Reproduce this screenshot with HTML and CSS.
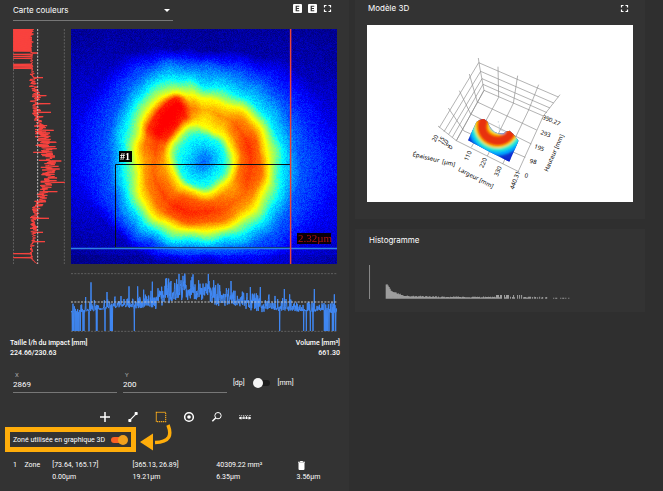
FILE: index.html
```html
<!DOCTYPE html>
<html lang="fr">
<head>
<meta charset="utf-8">
<title>Carte couleurs</title>
<link rel="stylesheet" href="styles.css">
</head>
<body>
<main class="layout">
  <section class="panel map-panel">
    <header class="map-header">
      <div class="select-wrap">
        <select class="view-select" aria-label="Vue"><option>Carte couleurs</option></select>
      </div>
      <div class="header-actions">
        <button class="icon-btn" aria-label="Exporter la carte"><svg viewBox="0 0 18 18"><rect width="18" height="18" rx="2" fill="#fff"/><path d="M12.500 4.500H6.500v9h6M6 9h6" fill="none" stroke="#333" stroke-width="2.400"/></svg></button>
        <button class="icon-btn" aria-label="Exporter les profils"><svg viewBox="0 0 18 18"><rect width="18" height="18" rx="2" fill="#fff"/><path d="M12.500 4.500H6.500v9h6M6 9h6" fill="none" stroke="#333" stroke-width="2.400"/></svg></button>
        <button class="icon-btn" aria-label="Plein écran"><svg viewBox="0 0 18 18"><path d="M3 7V3h4M11 3h4v4M15 11v4h-4M7 15H3v-4" fill="none" stroke="#fff" stroke-width="2.400"/></svg></button>
      </div>
    </header>

    <div class="charts">
      <svg class="profile-v" viewBox="0 0 156 705" preserveAspectRatio="none" role="img" aria-label="Profil vertical">
        <path class="guide" d="M1.500 0V705M154 0V705"/>
        <polyline id="profileV" class="line-red"/>
        <path class="guide guide-mid" d="M74 0V705"/>
      </svg>
      <div class="map">
        <canvas id="heat" class="heat" width="266" height="235"></canvas>
        <svg class="map-overlay" viewBox="0 0 266 235">
          <path d="M44.500 219V135.500H219" fill="none" stroke="#071018" stroke-width="1"/>
          <path d="M44 218.500H219" stroke="#0b2a55" stroke-width="1"/>
          <path d="M0 219.500H266" stroke="#2f80e4" stroke-width="1.300"/>
          <path d="M219.600 0V235" stroke="#ea4438" stroke-width="1.500"/>
          <rect x="48" y="122" width="13" height="11" fill="#000"/>
          <text class="zone-tag" x="49" y="131">#1</text>
          <rect x="226" y="204" width="34" height="11" fill="#0a0008"/>
          <text class="value-tag" x="227" y="213">2.32µm</text>
        </svg>
      </div>
      <svg class="profile-h" viewBox="0 0 798 177" preserveAspectRatio="none" role="img" aria-label="Profil horizontal">
        <path class="guide" d="M0 2H798M0 175H798"/>
        <polyline id="profileH" class="line-blue"/>
        <path class="guide guide-mid" d="M0 87H798"/>
      </svg>
    </div>

    <div class="stats">
      <div><div class="stat-name">Taille l/h du impact [mm]</div><div class="stat-value">224.66/230.63</div></div>
      <div class="stat-right"><div class="stat-name">Volume [mm³]</div><div class="stat-value">661.30</div></div>
    </div>

    <div class="coords">
      <div class="field"><label for="x">X</label><input id="x" type="text" value="2869"></div>
      <div class="field"><label for="y">Y</label><input id="y" type="text" value="200"></div>
      <label class="unit"><span>[dp]</span><input type="checkbox" class="switch"><span>[mm]</span></label>
    </div>

    <div class="tools">
      <button class="tool" aria-label="Point"><svg viewBox="0 0 36 36"><path d="M18 3V33M3 18H33" stroke="#fff" stroke-width="4.500"/></svg></button>
      <button class="tool" aria-label="Ligne"><svg viewBox="0 0 36 36"><path d="M8 28L28 8" stroke="#fff" stroke-width="3.500"/><rect x="4" y="24" width="9" height="9" rx="2" fill="#fff"/><rect x="23" y="3" width="9" height="9" rx="2" fill="#fff"/></svg></button>
      <button class="tool" aria-label="Zone"><svg viewBox="0 0 36 36"><rect x="4" y="4" width="28" height="28" fill="none" stroke="#f5a81c" stroke-width="3.500" stroke-dasharray="4 2"/></svg></button>
      <button class="tool" aria-label="Cercle"><svg viewBox="0 0 36 36"><circle cx="18" cy="18" r="13" fill="none" stroke="#fff" stroke-width="4.500"/><circle cx="18" cy="18" r="5.500" fill="#fff"/></svg></button>
      <button class="tool" aria-label="Loupe"><svg viewBox="0 0 36 36"><circle cx="21" cy="14" r="9.500" fill="none" stroke="#fff" stroke-width="3"/><path d="M14 21L4 31" stroke="#fff" stroke-width="4.500"/></svg></button>
      <button class="tool" aria-label="Règle"><svg viewBox="0 0 36 36"><path d="M0 21H36" stroke="#fff" stroke-width="3"/><path d="M1 12v3M7 12v3M13 12v3M19 12v3M25 12v3M31 12v3M35 12v3" stroke="#bbb" stroke-width="3"/><path d="M0 21l7-5v10zM36 21l-7-5v10zM13 16h3v8h-3zM21 16h3v8h-3z" fill="#fff"/></svg></button>
    </div>

    <div class="zone-option">
      <label class="highlight"><span>Zoné utilisée en graphique 3D</span><input type="checkbox" class="switch switch-on" checked></label>
      <svg class="arrow" viewBox="0 0 36 28"><path d="M32 1C36 11 34 18 19 18.500" fill="none" stroke="#ffad0a" stroke-width="3.500"/><path d="M4 18L17 9.500V26.500Z" fill="#ffad0a"/></svg>
    </div>

    <table class="zones">
      <tr><td class="c-id">1</td><td class="c-kind">Zone</td><td class="c-a">[73.64, 165.17]</td><td class="c-b">[365.13, 26.89]</td><td class="c-c">40309.22 mm²</td><td class="c-d"><button class="trash" aria-label="Supprimer"><svg viewBox="0 0 21 27"><path d="M0 2h6l1-2h7l1 2h6v3H0zM1.500 6h18V24a3 3 0 0 1-3 3h-12a3 3 0 0 1-3-3z" fill="#fff"/></svg></button></td></tr>
      <tr><td></td><td></td><td>0.00µm</td><td>19.21µm</td><td>6.35µm</td><td>3.56µm</td></tr>
    </table>
  </section>

  <div class="side">
    <section class="panel model-panel">
      <header class="model-header">
        <h2>Modèle 3D</h2>
        <button class="icon-btn" aria-label="Plein écran"><svg viewBox="0 0 18 18"><path d="M3 7V3h4M11 3h4v4M15 11v4h-4M7 15H3v-4" fill="none" stroke="#fff" stroke-width="2.400"/></svg></button>
      </header>
      <svg class="model" viewBox="-99 -75 798 531" role="img" aria-label="Modèle 3D">
        <defs>
          <clipPath id="surf"><path d="M204 271L229 216Q240 206 252 207L262 214Q270 236 284 246Q298 252 311 250Q316 243 329 242L340 252L356 272L328 335L268 305Z"/></clipPath>
          <filter id="soft" x="-50%" y="-50%" width="200%" height="200%"><feGaussianBlur stdDeviation="3"/></filter>
        </defs>
        <g fill="none" stroke="#8c8c8c" stroke-width="2">
          <path d="M236 38L475 141M242 64L461 159M246 86L450 174M249 103L441 188M252 121L430 198"/>
          <path d="M235 24L238 45L252 121M294 50L296 142M353 77L340 160M416 104L386 180M480 134L430 198"/>
          <path d="M236 38L118 233M242 64L132 245M246 86L146 253M249 103L157 262M252 121L169 272"/>
          <path d="M208 72L232 156L410 240M178 122L212 192L394 282M145 174L192 243L376 322M114 228L169 272L358 366"/>
          <path d="M252 121L169 272M296 142L214 292M340 160L262 318M386 180L308 342M430 198L354 366"/>
        </g>
        <g clip-path="url(#surf)">
          <rect x="190" y="190" width="180" height="160" fill="#102fd0"/>
          <g fill="none" filter="url(#soft)" stroke-linecap="round">
            <path d="M246 210C232 268 305 302 334 250" stroke="#00a8ff" stroke-width="82"/>
            <path d="M248 210C232 268 305 294 332 250" stroke="#25ecd0" stroke-width="64"/>
            <path d="M248 210C234 268 305 292 330 250" stroke="#ffdc00" stroke-width="46"/>
            <path d="M250 212C232 268 305 294 330 250" stroke="#ff8200" stroke-width="34"/>
            <path d="M249 214C232 268 304 292 330 254" stroke="#e83208" stroke-width="26"/>
            <path d="M276 232Q290 248 310 246" stroke="#00b8f0" stroke-width="11"/>
            <path d="M196 278L220 288M308 334L336 336" stroke="#0a20c8" stroke-width="18"/>
          </g>
        </g>
        <path d="M295 213v5M298 224v18M303 240l8 4" stroke="#b9c9d0" stroke-width="2"/>
        <g class="axis-text">
          <text transform="translate(37 318) rotate(14)" xml:space="preserve">Épaisseur  [µm]</text>
          <text transform="translate(173 362) rotate(27)">Largeur [mm]</text>
          <text transform="translate(443 366) rotate(-66)">Hauteur [mm]</text>
          <text transform="translate(426 206) rotate(23)">390.27</text>
          <text transform="translate(420 252) rotate(20)">293</text>
          <text transform="translate(401 294) rotate(20)">195</text>
          <text transform="translate(388 338) rotate(15)">98</text>
          <text transform="translate(373 382) rotate(12)">0</text>
          <text transform="translate(203 334) rotate(-66)">110</text>
          <text transform="translate(249 355) rotate(-66)">220</text>
          <text transform="translate(293 380) rotate(-66)">330</text>
          <text transform="translate(341 419) rotate(-70)">440.31</text>
          <text transform="translate(106 277) rotate(-62)">20</text>
          <text transform="translate(122 282) rotate(-50)">15</text>
          <text transform="translate(132 290) rotate(-45)">10</text>
          <text transform="translate(143 294) rotate(-35)">5</text>
          <text transform="translate(150 299) rotate(-30)">0</text>
        </g>
      </svg>
    </section>

    <section class="panel histo-panel">
      <h2>Histogramme</h2>
      <svg class="histo" viewBox="0 0 789 102" role="img" aria-label="Histogramme">
        <path d="M1.500 0V102" stroke="#8a8a8a" stroke-width="3"/>
        <path id="bars" fill="#b4b4b4"/>
      </svg>
    </section>
  </div>
</main>
<script src="charts.js"></script>
</body>
</html>
```
FILE: styles.css
```css
* { box-sizing: border-box; }

body {
  margin: 0;
  min-height: 100vh;
  background: #2f2f2f;
  color: #fff;
  font: 7px/10px Roboto, "Liberation Sans", sans-serif;
}

button { padding: 0; border: 0; background: none; color: inherit; display: block; }
button svg { display: block; width: 100%; height: 100%; }

h2 { margin: 0; font: 8px/12px Inter, sans-serif; }

.layout {
  display: grid;
  grid-template-columns: 349fr 290fr;
  gap: 6px;
  padding-right: 18px;
  min-height: 100vh;
}

.panel { background: #333; }

.map-header {
  display: flex;
  justify-content: space-between;
  align-items: flex-start;
  padding: 0 17px 8px 13px;
}

.select-wrap { position: relative; width: 50%; border-bottom: 1px solid #777; }
.select-wrap::after {
  content: "";
  position: absolute;
  right: 3px;
  top: 9px;
  border: 3px solid transparent;
  border-top-color: #fff;
  border-bottom: 0;
}

.view-select {
  appearance: none;
  width: 100%;
  height: 20px;
  padding: 0;
  border: 0;
  background: none;
  color: #fff;
  font: 8px/20px Inter, sans-serif;
}

.header-actions { display: flex; gap: 6px; padding-top: 4px; }
.icon-btn { width: 9px; height: 9px; }

.charts {
  display: grid;
  grid-template-columns: 52fr 266fr;
  gap: 9px 6px;
  padding: 0 12px 0 13px;
}

.profile-v { width: 100%; height: 100%; min-height: 0; contain: size; }
.map { position: relative; aspect-ratio: 266 / 235; }
.heat { display: block; width: 100%; height: 100%; }
.map-overlay { position: absolute; inset: 0; width: 100%; height: 100%; }
.profile-h { grid-column: 2; display: block; width: 100%; aspect-ratio: 266 / 59; }

.guide { fill: none; stroke: #777; stroke-width: 2; stroke-dasharray: 6 4; }
.guide-mid { stroke: #c4c4c4; stroke-width: 3; }
.line-red { fill: none; stroke: #f9433f; stroke-width: 3; }
.line-blue { fill: none; stroke: #4088f4; stroke-width: 3; }

.zone-tag { font: bold 10px "Liberation Serif", serif; fill: #fff; }
.value-tag { font: 11px "Liberation Serif", serif; fill: #b3140f; }

.stats {
  display: flex;
  justify-content: space-between;
  padding: 6px 9px 0 10px;
}
.stat-right { text-align: right; }
.stat-name, .stat-value { font-weight: 500; }

.coords {
  display: grid;
  grid-template-columns: repeat(3, 1fr);
  gap: 6px;
  padding: 13px 12px 0 13px;
}
.field { border-bottom: 1px solid #777; }
.field label { display: block; font-size: 6px; line-height: 8px; color: #aaa; padding-left: 2px; }
.field input {
  display: block;
  width: 100%;
  height: 13px;
  padding: 0 0 3px;
  border: 0;
  background: none;
  color: #fff;
  font: 8px/10px Roboto, sans-serif;
}
.unit { display: flex; align-items: center; gap: 8px; padding-top: 2px; }

.switch {
  appearance: none;
  position: relative;
  width: 17px;
  height: 10px;
  margin: 0;
}
.switch::before {
  content: "";
  position: absolute;
  inset: 2px 0 2px 2px;
  border-radius: 3px;
  background: #1c1c1c;
}
.switch::after {
  content: "";
  position: absolute;
  left: 0;
  top: 0;
  width: 10px;
  height: 10px;
  border-radius: 50%;
  background: #f4f4f4;
}
.switch-on::before { inset: 2px 2px 2px 0; background: #fb6023; }
.switch-on::after { left: auto; right: 0; background: #f2a11c; }

.tools { display: flex; justify-content: center; gap: 16px; padding: 18px 0 4px; }
.tool { width: 12px; height: 12px; }

.zone-option { display: flex; padding-left: 5px; position: relative; width: max-content; }
.highlight {
  display: flex;
  align-items: center;
  gap: 6px;
  height: 25px;
  padding: 0 3px;
  border: 5px solid #ffad0a;
}
.arrow { position: absolute; left: 100%; top: -3px; width: 36px; height: 28px; }

.zones {
  width: 100%;
  margin-top: 7px;
  table-layout: fixed;
  border-collapse: collapse;
}
.zones td { padding: 1px 0; height: 12px; white-space: nowrap; }
.zones td:first-child { padding-left: 13px; }
.c-id { width: 7%; }
.c-kind { width: 8%; }
.c-a { width: 23%; }
.c-b { width: 24%; }
.c-c { width: 23%; }
.c-d { width: 15%; }
.trash { width: 7px; height: 9px; margin-left: 1px; }

.side { display: flex; flex-direction: column; gap: 10px; }
.model-panel { padding: 2px 12px 17px; }
.model-header { display: flex; justify-content: space-between; align-items: center; padding: 0 4px 11px 1px; }
.model { display: block; width: 100%; background: #fff; }
.axis-text { font: 18px "Noto Sans", sans-serif; fill: #000; }

.histo-panel { padding: 5px 12px 13px 14px; }
.histo { display: block; width: 100%; margin-top: 19px; }
```
FILE: charts.js
```js
// Repeatable pseudo-random source so that the charts are stable between loads.
let seed = 12345;
function rnd() {
  seed = (seed * 1664525 + 1013904223) >>> 0;
  return seed / 4294967296;
}

function lerpTable(table, x) {
  if (x <= table[0][0]) return table[0][1];
  for (let i = 1; i < table.length; i++) {
    if (x <= table[i][0]) {
      const [x0, y0] = table[i - 1], [x1, y1] = table[i];
      return y0 + (y1 - y0) * (x - x0) / (x1 - x0);
    }
  }
  return table[table.length - 1][1];
}

// Impact outline: angle, then radii of inner cyan, inner yellow, ridge,
// outer yellow, outer cyan, light blue, dark blue; last the ridge and far levels.
const rings = [
  [0, 62, 88, 138, 193, 236, 285, 380, 0.82, 0.14],
  [20, 58, 85, 140, 198, 240, 290, 390, 0.81, 0.12],
  [45, 58, 84, 146, 205, 246, 295, 370, 0.77, 0.1],
  [90, 70, 90, 150, 205, 238, 265, 300, 0.83, 0.08],
  [122, 73, 92, 158, 216, 254, 285, 330, 0.84, 0.06],
  [135, 74, 95, 158, 220, 260, 298, 340, 0.81, 0.06],
  [180, 78, 102, 150, 202, 245, 285, 390, 0.77, 0.11],
  [200, 80, 108, 156, 212, 256, 300, 400, 0.81, 0.1],
  [214, 82, 112, 162, 225, 266, 312, 400, 0.88, 0.08],
  [230, 84, 114, 172, 236, 276, 325, 410, 0.9, 0.05],
  [245, 84, 116, 184, 232, 278, 325, 375, 0.89, 0.04],
  [258, 84, 116, 168, 206, 254, 305, 350, 0.75, 0.04],
  [270, 80, 110, 154, 190, 232, 290, 335, 0.7, 0.03],
  [292, 74, 95, 148, 188, 226, 290, 355, 0.73, 0.04],
  [315, 74, 93, 146, 196, 232, 290, 400, 0.79, 0.05],
  [340, 68, 90, 138, 193, 234, 285, 400, 0.83, 0.09],
  [360, 62, 88, 138, 193, 236, 285, 380, 0.82, 0.14]
];

function level(x, y) {
  const dx = x * 3 - 399, dy = y * 3 - 399;
  const r = Math.hypot(dx, dy) + 4 * Math.sin(dx / 17 + 1) * Math.sin(dy / 21);
  const a = (Math.atan2(dy, dx) * 180 / Math.PI + 360) % 360;
  let i = 1;
  while (rings[i][0] < a) i++;
  const p = rings[i - 1], q = rings[i];
  let t = (a - p[0]) / (q[0] - p[0]);
  t = t * t * (3 - 2 * t);
  const k = p.map((v, n) => v + (q[n] - v) * t);
  const half = (k[3] - k[2]) * 0.55, outer = (k[4] - k[3]) * 0.55;
  return lerpTable([
    [0, 0.22], [k[1], 0.4], [k[2], 0.62], [k[3] - half, k[8] - 0.05], [k[3], k[8]],
    [k[3] + outer, k[8] - 0.05], [k[4], 0.62], [k[5], 0.36], [k[6], 0.21],
    [k[7], k[9]], [k[7] + 140, k[9] * 0.4]
  ], r);
}

function jet(v) {
  const c = (o) => Math.round(255 * Math.max(0, Math.min(1, 1.5 - Math.abs(4 * v - o))));
  return v > 0.875 ? [255, 0, 0] : [c(3), c(2), c(1)];
}

const canvas = document.getElementById('heat');
const ctx = canvas.getContext('2d');
const image = ctx.createImageData(266, 235);
for (let y = 0; y < 235; y++) {
  for (let x = 0; x < 266; x++) {
    let v = level(x, y);
    if (y > 225) v -= 0.02;
    const noise = (rnd() + rnd() - 1) * (v < 0.5 ? 0.04 : 0.02);
    const [r, g, b] = jet(Math.max(0, v + noise));
    const o = (y * 266 + x) * 4;
    image.data.set([r, g, b, 255], o);
  }
}
ctx.putImageData(image, 0, 0);

// Vertical profile: position runs down, value runs right.
const vBase = [[0, 57], [67, 55], [120, 56], [150, 60], [200, 68], [250, 70], [280, 78], [330, 95], [400, 108], [440, 110], [480, 100], [515, 82], [545, 66], [570, 64], [620, 62], [670, 55], [690, 57], [705, 72]];
const vAmp = [[0, 9], [67, 5], [120, 7], [180, 17], [280, 24], [320, 34], [480, 32], [530, 17], [600, 12], [670, 5], [705, 3]];
const vSpikes = { 72: 75, 146: 90, 200: 100, 224: 112, 250: 114, 304: 122, 340: 130, 370: 61, 396: 145, 420: 140, 460: 155, 488: 133, 568: 108, 610: 90, 638: 96 };
const vDrops = [76, 82, 88, 106, 110, 114, 118, 674, 686];
const vPts = [];
for (let u = 0; u <= 704; u++) {
  let v = lerpTable(vBase, u) + (rnd() + rnd() - 1) * lerpTable(vAmp, u);
  if (vSpikes[u]) v = vSpikes[u];
  if ((u < 67 && u % 2 === 0) || vDrops.includes(u)) v = 1;
  vPts.push(v.toFixed(1) + ',' + u);
}
document.getElementById('profileV').setAttribute('points', vPts.join(' '));

// Horizontal profile.
const hBase = [[0, 108], [50, 106], [90, 101], [160, 90], [190, 98], [240, 90], [280, 72], [320, 60], [370, 54], [410, 58], [440, 74], [500, 82], [560, 92], [620, 102], [798, 108]];
const hAmp = [[0, 24], [50, 24], [100, 34], [170, 30], [240, 46], [320, 58], [400, 58], [450, 48], [520, 50], [600, 38], [700, 30], [798, 24]];
const hSpikes = { 44: 72, 60: 28, 108: 57, 174: 40, 200: 40, 218: 50, 244: 26, 324: 3, 342: 5, 366: 4, 412: 3, 480: 24, 538: 42, 568: 42, 640: 48, 656: 64, 698: 45, 730: 48, 790: 64 };
const hDrops = [4, 8, 12, 15, 18, 21, 24, 28, 36, 39, 54, 76, 78, 102, 118, 121, 124, 190, 626, 698, 706, 718, 726, 760, 763, 766, 770, 774, 784, 788, 794];
const hPts = [];
for (let u = 0; u <= 798; u++) {
  const k = rnd();
  let v = lerpTable(hBase, u) + 4 - k * k * k * lerpTable(hAmp, u) + (u > 240 && u < 580 ? (rnd() - 0.35) * 34 : rnd() * 8);
  if (hSpikes[u]) v = hSpikes[u];
  if (hDrops.includes(u)) v = 174;
  hPts.push(u + ',' + Math.max(2, v).toFixed(1));
}
document.getElementById('profileH').setAttribute('points', hPts.join(' '));

// Histogram bars, thinning out to the right.
const heights = [[50, 42], [54, 44], [60, 32], [66, 22], [80, 16], [92, 13], [100, 8], [130, 7], [200, 5], [400, 4]];
let d = '';
for (let x = 50; x < 615; x += 3) {
  if (x > 385 && rnd() < (x - 300) / 420) continue;
  let h = lerpTable(heights, x) + (rnd() - 0.5) * 3;
  if (x > 360 && x < 460 && rnd() < 0.45) h = 10;
  if (x > 530) h = 2;
  d += `M${x} ${100 - h}h2.500v${h + 1}h-2.500z`;
}
document.getElementById('bars').setAttribute('d', d);
```
